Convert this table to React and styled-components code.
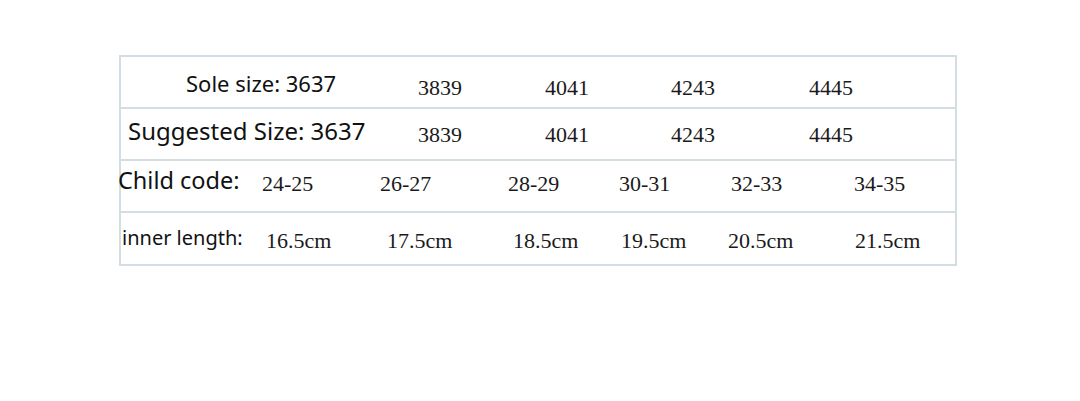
import React from "react";
import styled, { createGlobalStyle } from "styled-components";

const GlobalStyle = createGlobalStyle`
  html, body {
    margin: 0;
    padding: 0;
    background: #ffffff;
  }
`;

const ROWS = [
  {
    label: "Sole size: 3637",
    size: 22,
    indent: 65,
    shift: 6,
    lift: 10,
    cols: "232px 127px 126px 138px 1fr",
    values: ["3839", "4041", "4243", "4445"],
  },
  {
    label: "Suggested Size: 3637",
    size: 24,
    indent: 7,
    shift: 1,
    lift: 8,
    cols: "290px 127px 126px 138px 1fr",
    values: ["3839", "4041", "4243", "4445"],
  },
  {
    label: "Child code:",
    size: 23.5,
    indent: 0,
    nudge: -3,
    shift: -2,
    lift: 6,
    cols: "141px 118px 128px 111px 112px 123px 1fr",
    values: ["24-25", "26-27", "28-29", "30-31", "32-33", "34-35"],
  },
  {
    label: "inner length:",
    size: 20,
    indent: 1,
    shift: 2,
    lift: 6,
    cols: "144px 121px 126px 108px 107px 127px 1fr",
    values: ["16.5cm", "17.5cm", "18.5cm", "19.5cm", "20.5cm", "21.5cm"],
  },
];

const App = () => {
  return (
    <Page>
      <GlobalStyle />
      <Table>
        {ROWS.map((row, i) => (
          <Row
            key={i}
            $cols={row.cols}
            $indent={row.indent}
            $shift={row.shift}
            $last={i === ROWS.length - 1}
          >
            <Label $size={row.size} $nudge={row.nudge || 0} $lift={row.lift}>
              {row.label}
            </Label>
            {row.values.map(v => (
              <Value key={v}>{v}</Value>
            ))}
          </Row>
        ))}
      </Table>
    </Page>
  );
};

const Page = styled.div`
  width: 1080px;
  height: 401px;
  padding: 55px 0 0 119px;
  box-sizing: border-box;
  background: #ffffff;
`;

const Table = styled.div`
  width: 838px;
  display: flex;
  flex-direction: column;
  border: 2px solid #d3dee2;
  box-sizing: border-box;
`;

const Row = styled.div`
  height: 52px;
  display: grid;
  grid-template-columns: ${props => props.$cols};
  align-items: center;
  padding-left: ${props => props.$indent}px;
  padding-top: ${props => Math.max(0, props.$shift * 2)}px;
  padding-bottom: ${props => Math.max(0, -props.$shift * 2)}px;
  border-bottom: ${props => (props.$last ? "none" : "2px solid #d3dee2")};
  box-sizing: border-box;
  &:last-child {
    height: 51px;
  }
`;

const Label = styled.span`
  font-family: "Noto Sans", "Liberation Sans", sans-serif;
  font-size: ${props => props.$size}px;
  line-height: 1;
  color: #111111;
  white-space: nowrap;
  margin-left: ${props => props.$nudge}px;
  margin-bottom: ${props => props.$lift}px;
`;

const Value = styled.span`
  font-family: "Liberation Serif", "Times New Roman", serif;
  font-size: 22px;
  line-height: 1;
  color: #1a1a1a;
  white-space: nowrap;
`;

export default App;
